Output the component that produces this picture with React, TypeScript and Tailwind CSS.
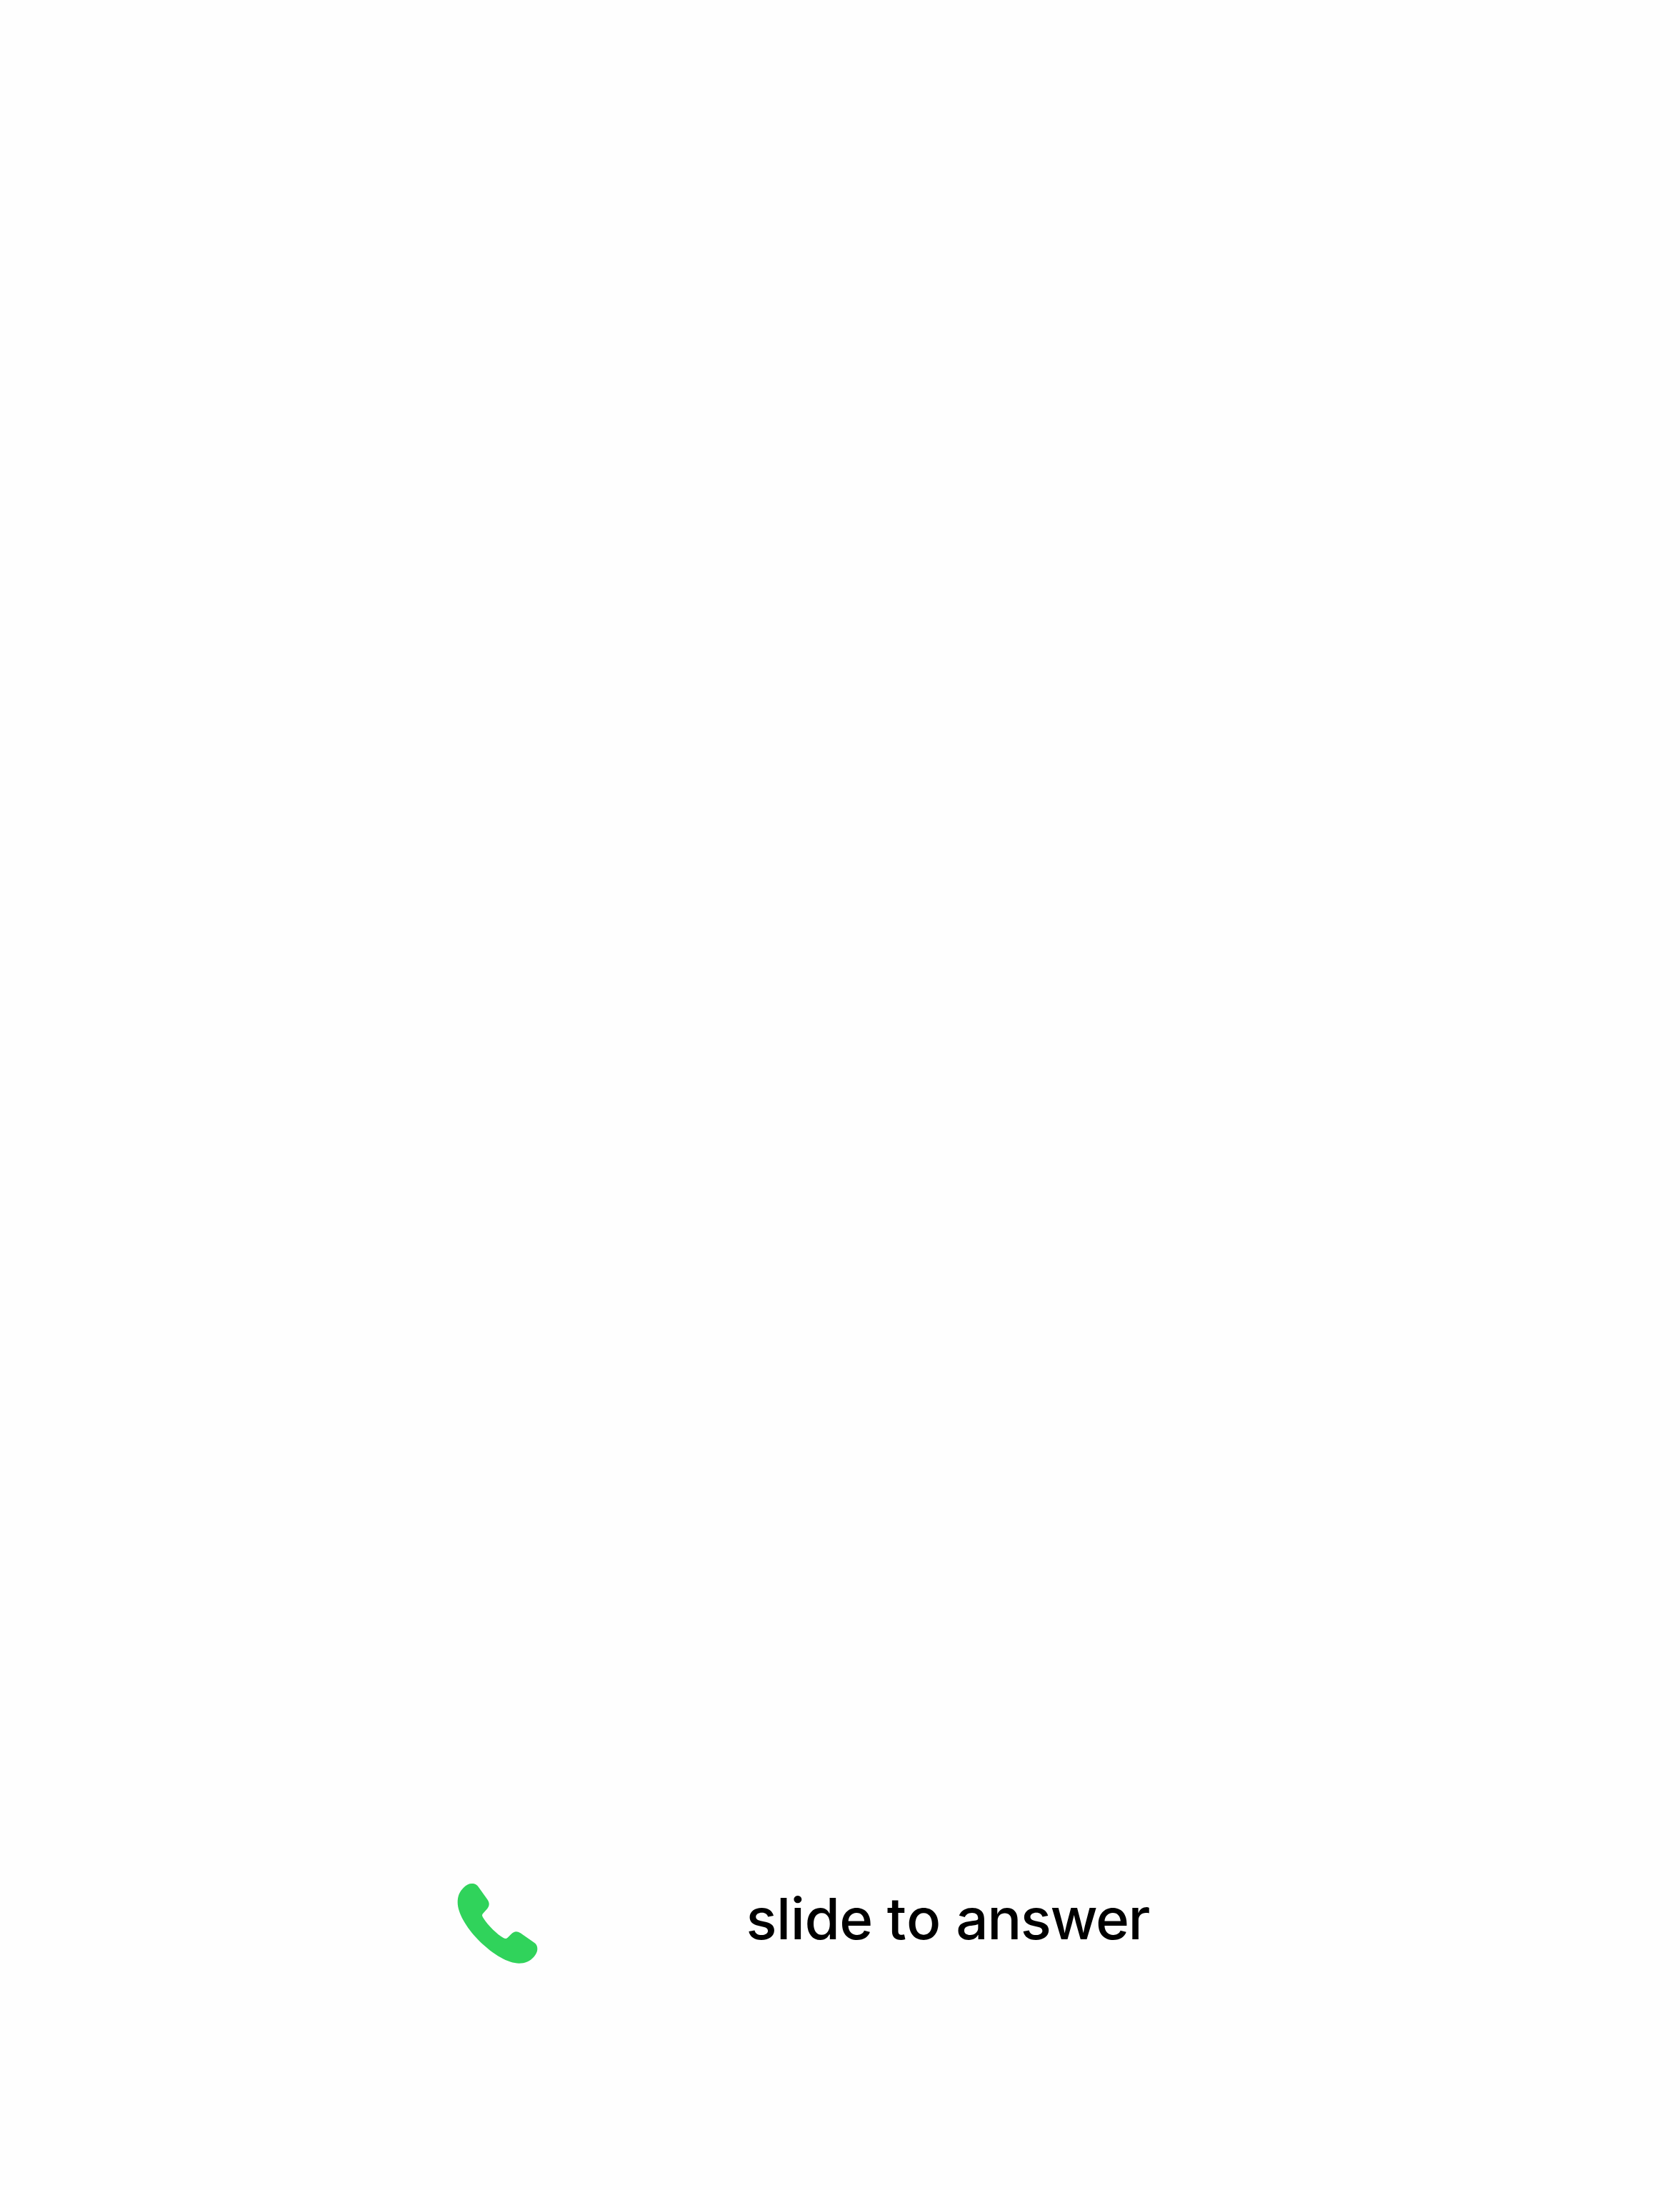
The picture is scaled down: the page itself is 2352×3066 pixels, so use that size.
function PhoneIcon() {
  return (
    <svg viewBox="60 48 342 342" className="size-[114px] shrink-0" fill="#30d35b" aria-hidden="true">
      <path d="M122 51C136 51 143 56 150 66L187 118C197 132 196 145 187 156L169 176C163 183 165 186 169 194C178 210 195 228 211 245C226 259 240 271 254 279C262 284 267 283 272 278L287 263C299 251 311 249 326 259L384 299C394 306 397 314 397 326C397 337 391 348 382 359C366 377 345 386 320 386C275 386 213 351 152 291C96 234 62 173 62 130C62 103 70 85 87 68C98 57 109 51 122 51Z" />
    </svg>
  );
}

export default function App() {
  return (
    <main className="flex min-h-screen flex-col justify-end bg-[#fefefe] font-['Inter','Liberation_Sans',sans-serif] text-black">
      {/* Slide-to-answer control: handset thumb and its label */}
      <div className="flex h-[430px] items-start gap-[290.5px] pl-[640px]">
        <PhoneIcon />
        <p className="pt-[10px] text-[80px] leading-none font-medium whitespace-nowrap [word-spacing:-1.5px]">
          <span className="tracking-[-0.5px]">slide</span> <span className="tracking-[1px]">to</span>{" "}
          <span className="tracking-[-1.5px]">answer</span>
        </p>
      </div>
    </main>
  );
}
